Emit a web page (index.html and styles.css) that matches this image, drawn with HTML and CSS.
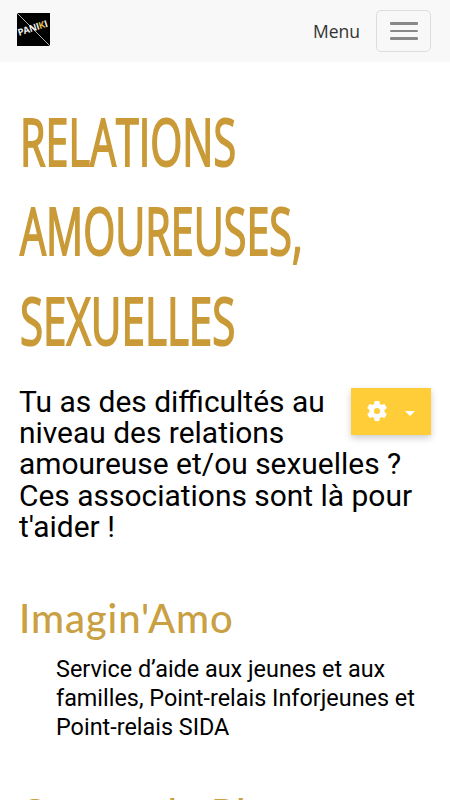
FILE: index.html
```html
<!DOCTYPE html>
<html lang="fr">
<head>
<meta charset="utf-8">
<meta name="viewport" content="width=device-width, initial-scale=1">
<title>Relations amoureuses, sexuelles</title>
<link rel="stylesheet" href="styles.css">
</head>
<body>
<header class="navbar">
  <a class="brand" href="#">
    <svg width="33" height="33" viewBox="0 0 33 33" aria-hidden="true">
      <rect width="33" height="33" fill="#000"/>
      <path d="M0 0 33 33" stroke="#b5aaa2" stroke-width="1"/>
      <text class="logo-text" x="2" y="23" textLength="31" transform="rotate(-18 2 23)">PANI<tspan fill="#d8b347">K</tspan>I</text>
    </svg>
  </a>
  <span class="menu-label">Menu</span>
  <button class="toggle" aria-label="Menu"><i></i><i></i><i></i></button>
</header>
<main>
  <h1><span class="l1">RELATIONS</span><span class="l2">AMOUREUSES,</span><span class="l3">SEXUELLES</span></h1>
  <section class="intro">
    <button class="settings" aria-label="Options">
      <svg class="gear" width="20" height="20" viewBox="2 2 20 20" aria-hidden="true"><path fill="#fff" d="M19.43 12.98c.04-.32.07-.64.07-.98s-.03-.66-.07-.98l2.11-1.65c.19-.15.24-.42.12-.64l-2-3.46c-.12-.22-.39-.3-.61-.22l-2.49 1c-.52-.4-1.08-.73-1.69-.98l-.38-2.65C14.46 2.18 14.25 2 14 2h-4c-.25 0-.46.18-.49.42l-.38 2.65c-.61.25-1.17.59-1.69.98l-2.49-1c-.23-.09-.49 0-.61.22l-2 3.46c-.13.22-.07.49.12.64l2.11 1.65c-.04.32-.07.65-.07.98s.03.66.07.98l-2.11 1.65c-.19.15-.24.42-.12.64l2 3.46c.12.22.39.3.61.22l2.49-1c.52.4 1.08.73 1.69.98l.38 2.65c.03.24.24.42.49.42h4c.25 0 .46-.18.49-.42l.38-2.65c.61-.25 1.17-.59 1.69-.98l2.49 1c.23.09.49 0 .61-.22l2-3.46c.12-.22.07-.49-.12-.64l-2.11-1.65zM12 15.1a3.1 3.1 0 1 1 0-6.2 3.1 3.1 0 0 1 0 6.2z"/></svg>
      <span class="caret"></span>
    </button>
    <p>Tu as des difficultés au niveau des relations amoureuse et/ou sexuelles ? Ces associations sont là pour t'aider !</p>
  </section>
  <h2>Imagin'Amo</h2>
  <p class="description">Service d’aide aux jeunes et aux familles, Point-relais Inforjeunes et Point-relais SIDA</p>
  <h2 class="next">Centre de Plan</h2>
</main>
</body>
</html>
```
FILE: styles.css
```css
* { box-sizing: border-box; }
html, body { height: 100%; }
body { margin: 0; overflow: hidden; background: #fff; color: #000; font-family: Roboto, sans-serif; }
.navbar { height: 62px; padding: 0 19px 0 17px; display: flex; align-items: center; background: #f8f8f8; }
.brand { display: flex; margin-top: -4px; }
.logo-text { font: 700 9.5px "Open Sans", sans-serif; fill: #eee; }
.menu-label { margin-left: auto; margin-right: 16px; font: 400 17.5px/24px "Open Sans", sans-serif; color: #333; }
.toggle { width: 55px; height: 42px; padding: 0; border: 1px solid #ddd; border-radius: 5px; background: transparent; display: flex; flex-direction: column; align-items: center; justify-content: center; gap: 5px; }
.toggle i { width: 28px; height: 2.5px; background: #888; border-radius: 1px; }
main { padding: 34px 19px 0; }
h1 { margin: 0; font: 400 66px/89.3px "Open Sans", sans-serif; color: #c99a37; }
h1 span { display: block; width: max-content; transform-origin: left; -webkit-text-stroke: 2px #c99a37; }
.l1 { transform: translateX(1px) scaleX(.625); }
.l2 { transform: translateX(1px) scaleX(.625); }
.l3 { transform: translateX(1px) scaleX(.638); }
.intro { margin-top: 22px; font-size: 29.95px; line-height: 31.2px; }
.intro p { margin: 0; }
.settings { float: right; width: 80px; height: 47px; margin: 2px 0 8px 16px; padding: 0 16px; border: 0; background: #ffcd37; box-shadow: 0 3px 7px rgba(0,0,0,.2); display: flex; align-items: center; justify-content: space-between; }
.caret { border: 5px solid transparent; border-top-color: #fff; border-bottom: 0; margin-top: 4px; }
h2 { margin: 50px 0 0; height: 52px; font: 500 40px/52px Lato, sans-serif; letter-spacing: .9px; color: #c9a042; white-space: nowrap; }
.description { margin: 11px 10px 0 37px; font-size: 23.4px; line-height: 29px; }
.next { margin-top: 45px; }
```
